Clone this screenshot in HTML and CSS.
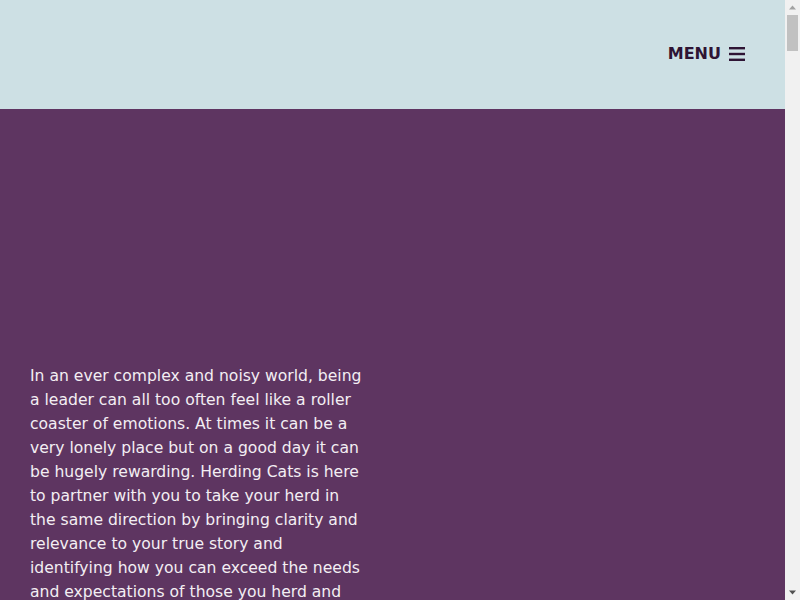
FILE: index.html
```html
<!DOCTYPE html>
<html lang="en">
<head>
<meta charset="utf-8">
<title>Herding Cats</title>
<link rel="stylesheet" href="styles.css">
</head>
<body>
<header class="site-header">
  <button class="menu-btn" type="button">
    <span class="menu-label">MENU</span>
    <svg class="menu-icon" width="16" height="14" viewBox="0 0 16 14" aria-hidden="true">
      <rect x="0" y="0" width="16" height="2.4" fill="#2e1434"/>
      <rect x="0" y="5.8" width="16" height="2.4" fill="#2e1434"/>
      <rect x="0" y="11.6" width="16" height="2.4" fill="#2e1434"/>
    </svg>
  </button>
</header>
<main class="hero">
  <p class="intro">In an ever complex and noisy world, being a leader can all too often feel like a roller coaster of emotions. At times it can be a very lonely place but on a good day it can be hugely rewarding. Herding Cats is here to partner with you to take your herd in the same direction by bringing clarity and relevance to your true story and identifying how you can exceed the needs and expectations of those you herd and lead, so that together you can achieve great things.</p>
</main>
<div class="scrollbar" aria-hidden="true">
  <div class="sb-btn">
    <svg width="15" height="15" viewBox="0 0 15 15"><path d="M4 9.5h7l-3.5-4z" fill="#a3a3a3"/></svg>
  </div>
  <div class="sb-track"><div class="sb-thumb"></div></div>
  <div class="sb-btn">
    <svg width="15" height="15" viewBox="0 0 15 15"><path d="M4 5.5h7l-3.5 4z" fill="#505050"/></svg>
  </div>
</div>
</body>
</html>
```

FILE: styles.css
```css
html, body {
  margin: 0;
  padding: 0;
}
html {
  background: #f1f1f1;
}
body {
  margin-right: 15px;
  font-family: "DejaVu Sans", "Noto Sans", sans-serif;
  background: #5e3561;
}
.site-header {
  height: 109px;
  background: #cde0e4;
  display: flex;
  align-items: center;
  justify-content: flex-end;
  padding-right: 40px;
}
.menu-btn {
  display: flex;
  align-items: center;
  gap: 8px;
  background: none;
  border: 0;
  padding: 0;
  margin-bottom: 2px;
  cursor: pointer;
  color: #2e1434;
  font-family: "DejaVu Sans", sans-serif;
}
.menu-label {
  font-weight: 700;
  font-size: 16px;
}
.menu-icon {
  display: block;
}
.hero {
  padding: 255px 30px 160px;
}
.intro {
  margin: 0;
  width: 334px;
  color: #f3eef3;
  font-size: 15.6px;
  line-height: 24px;
}
.scrollbar {
  position: fixed;
  top: 0;
  right: 0;
  bottom: 0;
  width: 15px;
  background: #f1f1f1;
  display: flex;
  flex-direction: column;
}
.sb-btn {
  height: 15px;
  flex: none;
}
.sb-btn svg {
  display: block;
}
.sb-track {
  flex: 1;
  padding: 0 2px;
}
.sb-thumb {
  height: 36px;
  background: #c1c1c1;
}
```
